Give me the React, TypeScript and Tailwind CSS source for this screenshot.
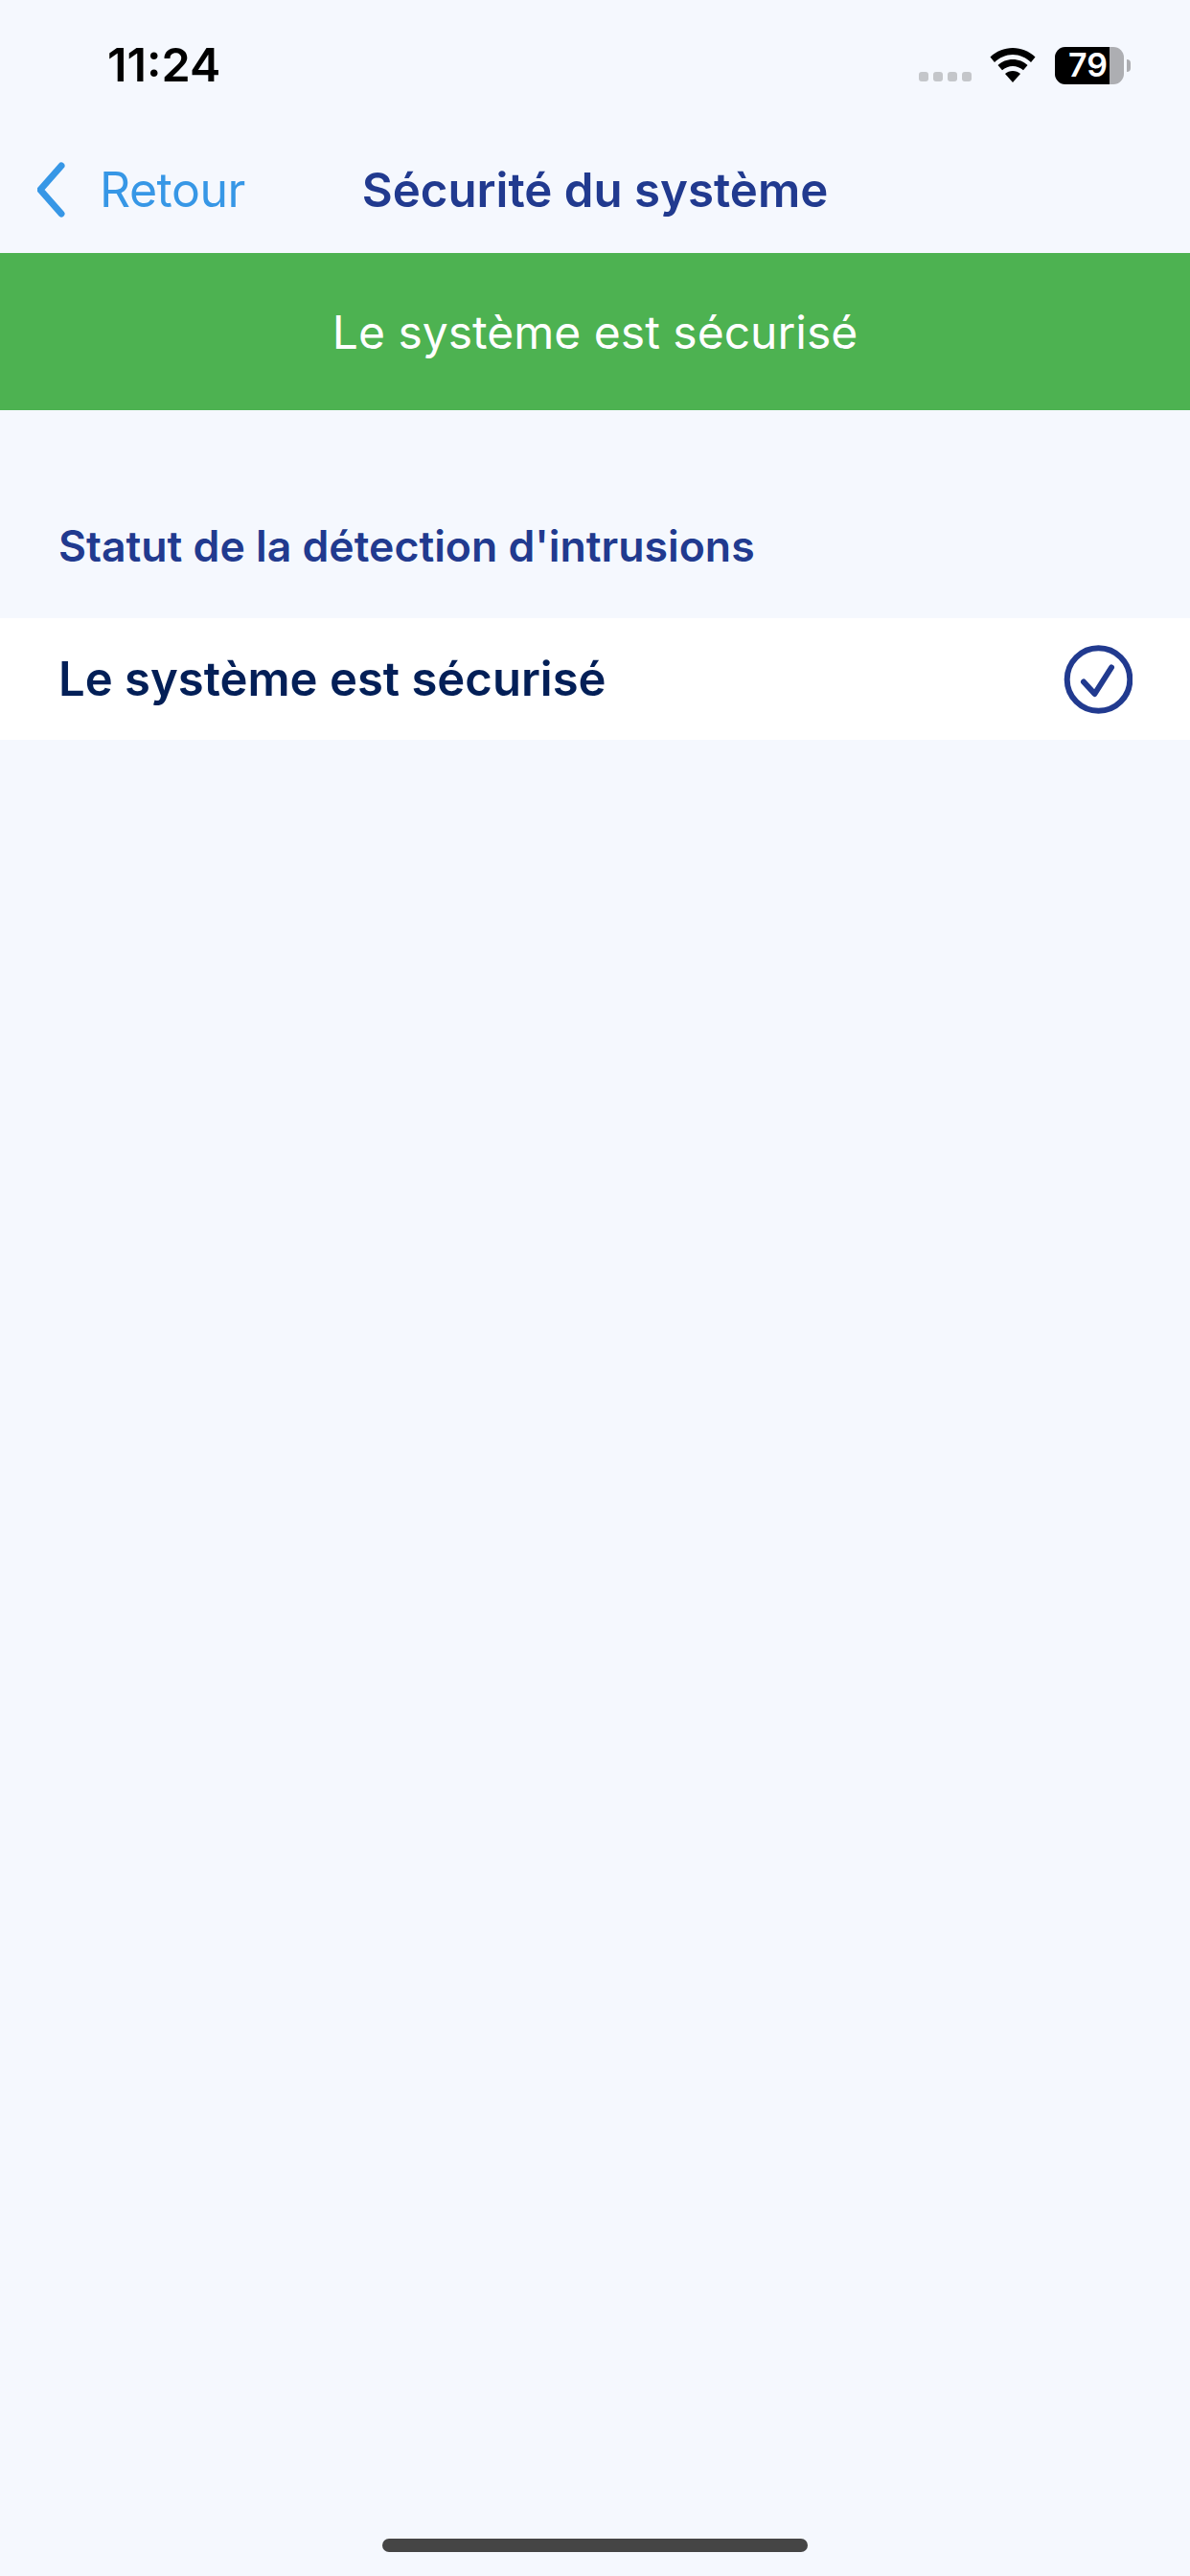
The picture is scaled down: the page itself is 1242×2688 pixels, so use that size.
const font = { fontFamily: "Inter, 'Liberation Sans', sans-serif" };

function StatusBar() {
    return (
        <div className="flex h-[132px] shrink-0 items-center justify-between pt-[4px] pr-[62px] pl-[112px]">
            <span className="text-[48.500px] leading-[48px] font-semibold text-black">11:24</span>
            <div className="flex items-center">
                <div className="mt-[24px] flex gap-[5px]">
                    <span className="size-[10px] rounded-[3px] bg-[#c4c6ca]" />
                    <span className="size-[10px] rounded-[3px] bg-[#c4c6ca]" />
                    <span className="size-[10px] rounded-[3px] bg-[#c4c6ca]" />
                    <span className="size-[10px] rounded-[3px] bg-[#c4c6ca]" />
                </div>
                <svg width="48" height="36" viewBox="0 0 48 36" className="ml-[19px]">
                    <path d="M24 0C15 0 7 3.500 0.500 9.500L5 15C10 10 17 7 24 7s14 3 19 8l4.500-5.500C41 3.500 33 0 24 0z" fill="#000" />
                    <path d="M24 12c-6 0-11.500 2.300-15.500 6L13 23.300C16 20.700 20 19 24 19s8 1.700 11 4.300l4.500-5.300C35.500 14.300 30 12 24 12z" fill="#000" />
                    <path d="M24 24c-3 0-5.800 1.100-8 3l8 9 8-9c-2.200-1.900-5-3-8-3z" fill="#000" />
                </svg>
                <div className="ml-[20px] flex items-center">
                    <div className="flex h-[39px] w-[72px] overflow-hidden rounded-[11px] bg-[#adaeb2]">
                        <div className="flex w-[57px] items-center justify-end bg-black pr-[2px] text-[34px] leading-none font-semibold text-white">
                            79
                        </div>
                    </div>
                    <span className="ml-[3px] h-[13px] w-[4px] rounded-r-full bg-[#adaeb2]" />
                </div>
            </div>
        </div>
    );
}

function NavBar() {
    return (
        <div className="relative flex h-[132px] shrink-0 items-center justify-center">
            <div className="absolute top-[36px] left-[39px] flex items-center">
                <svg width="30" height="60" viewBox="0 0 30 60">
                    <path d="M25 5 3 30l22 25" fill="none" stroke="#3797e6" strokeWidth="7" strokeLinecap="round" strokeLinejoin="round" />
                </svg>
                <span className="ml-[35px] text-[50px] leading-[60px] font-normal tracking-[-0.500px] text-[#3797e6]">Retour</span>
            </div>
            <h1 className="text-[49.200px] leading-[60px] font-semibold text-[#213a8f]">Sécurité du système</h1>
        </div>
    );
}

export default function App() {
    return (
        <main style={font} className="flex h-[2688px] flex-col bg-[#f5f8fe]">
            <StatusBar />
            <NavBar />
            <div className="flex h-[164px] shrink-0 items-center justify-center bg-[#4db251] pt-[2px] text-[48px] font-normal text-white">
                Le système est sécurisé
            </div>
            <div className="flex h-[217px] shrink-0 items-end px-[61px] pb-[45px] text-[44.600px] leading-[60px] font-semibold text-[#213a8f]">
                Statut de la détection d'intrusions
            </div>
            <div className="flex h-[127px] shrink-0 items-center justify-between bg-white pr-[60px] pl-[61px]">
                <span className="text-[49px] font-semibold text-[#031f57]">Le système est sécurisé</span>
                <svg width="72" height="72" viewBox="0 0 72 72">
                    <circle cx="36.500" cy="36" r="32.800" fill="none" stroke="#213a8f" strokeWidth="6" />
                    <path d="M21 38.500l11.500 12.500L50 23.500" fill="none" stroke="#213a8f" strokeWidth="6" strokeLinecap="round" strokeLinejoin="round" />
                </svg>
            </div>
            <div className="mt-auto mb-[25px] h-[14px] w-[444px] self-center rounded-full bg-[#454545]" />
        </main>
    );
}
